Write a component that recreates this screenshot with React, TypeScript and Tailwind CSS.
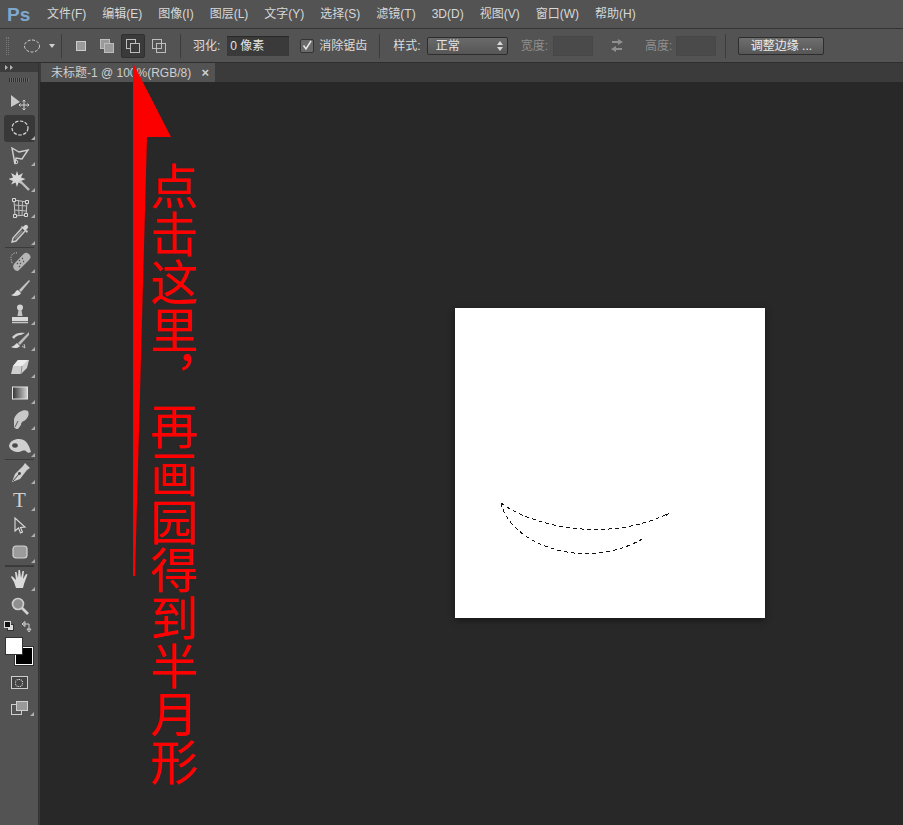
import type { ReactNode } from 'react';

const font = { fontFamily: '"Liberation Sans", "Noto Sans CJK SC", sans-serif' };

const menus = ['文件(F)', '编辑(E)', '图像(I)', '图层(L)', '文字(Y)', '选择(S)', '滤镜(T)', '3D(D)', '视图(V)', '窗口(W)', '帮助(H)'];

function Ic({ children, w = 22, h = 22 }: { children: ReactNode; w?: number; h?: number }) {
  return (
    <svg width={w} height={h} viewBox={`0 0 ${w} ${h}`} fill="none">
      {children}
    </svg>
  );
}

const tools: { icon: ReactNode; corner?: boolean; active?: boolean; sepAfter?: boolean }[] = [
  {
    icon: (
      <Ic>
        <path d="M2 4v12l9-5z" fill="#c9c9c9" />
        <path d="M15 9v10M10 14h10M13.5 10.5 15 9l1.500 1.500M13.500 17.500 15 19l1.500-1.500M11.500 12.500 10 14l1.500 1.500M18.500 12.500 20 14l-1.500 1.500" stroke="#cfcfcf" strokeWidth="1" />
      </Ic>
    ),
  },
  {
    active: true,
    corner: true,
    icon: (
      <Ic>
        <ellipse cx="11" cy="11" rx="8" ry="7" stroke="#d8d8d8" strokeWidth="1.200" strokeDasharray="3.500 1.500" />
      </Ic>
    ),
  },
  {
    corner: true,
    icon: (
      <Ic>
        <path d="M3 4l7 4 9-2-6 9-6-1-1 6-3-16z" stroke="#d0d0d0" strokeWidth="1.400" />
        <circle cx="7" cy="18" r="1.800" stroke="#d0d0d0" />
      </Ic>
    ),
  },
  {
    corner: true,
    icon: (
      <Ic>
        <path d="M8 1l1.500 4.500L14 3l-2 4.500 4.500 1.500L12 11l2 3.500-4.500-2L8 17l-1.500-4.500L2 14.500 4 11-.5 9 4 7.500 2 3l4.500 2.500z" fill="#d8d8d8" />
        <path d="M11 11l9 9" stroke="#bdbdbd" strokeWidth="2.400" />
      </Ic>
    ),
  },
  {
    corner: true,
    icon: (
      <Ic>
        <path d="M5 4l13 2-1 13-11 1z" stroke="#c9c9c9" strokeWidth="1" />
        <path d="M9.500 4.500 10 20M13.500 5l-.5 15M5.300 9l12.400 1M5.700 14l11.800 1" stroke="#bcbcbc" strokeWidth="1" />
        <path d="M3.500 2.500h3v3h-3zM16.500 4.500h3v3h-3zM4.500 18.500h3v3h-3zM15.500 17.500h3v3h-3z" fill="#555" stroke="#d8d8d8" />
      </Ic>
    ),
  },
  {
    corner: true,
    sepAfter: true,
    icon: (
      <Ic>
        <path d="M13 5 4 15l-1 4 4-1 9-10" stroke="#cfcfcf" strokeWidth="1.400" />
        <path d="M13 8l-7 8" stroke="#888" strokeWidth="1.500" />
        <path d="M12 4l6 6 1-2-2-1 1.500-1.500a2 2 0 0 0-3-3L14 4l-1-1z" fill="#d4d4d4" />
      </Ic>
    ),
  },
  {
    corner: true,
    icon: (
      <Ic>
        <path d="M9 21l11-11a3.500 3.500 0 0 0-5.500-6L5 14a4.500 4.500 0 0 0 4 7z" fill="#b5b5b5" />
        <path d="M10 10l1 1M13 8l1 1M8 13l1 1M11 13l1 1M14 11l1 1M10 16l1 1" stroke="#555" strokeWidth="1.200" />
        <path d="M8 3a5 5 0 0 0-6 5c0 3 1 5 2 6" stroke="#ddd" strokeDasharray="1 1.500" />
      </Ic>
    ),
  },
  {
    corner: true,
    icon: (
      <Ic>
        <path d="M20 3 10 13l2 2L21 4z" fill="#c4c4c4" />
        <path d="M9 13c-3 0-2 4-7 5 3 2 9 1 10-2z" fill="#dcdcdc" />
      </Ic>
    ),
  },
  {
    corner: true,
    icon: (
      <Ic>
        <circle cx="11" cy="4.500" r="3" fill="#d2d2d2" />
        <path d="M9.500 7h3l1 6h-5z" fill="#c4c4c4" />
        <path d="M3 14h16v4H3z" fill="#dadada" />
        <path d="M3 19.500h16" stroke="#c8c8c8" strokeWidth="1.500" />
      </Ic>
    ),
  },
  {
    corner: true,
    icon: (
      <Ic>
        <path d="M3 8c3-4 8-5 13-4l-4 2c-3 0-6 2-7 4z" fill="#d0d0d0" />
        <path d="M20 3 9 14l2 2L20 6z" fill="#bdbdbd" />
        <path d="M8 14c-2 1-2 3-6 4 3 2 8 1 9-1z" fill="#dcdcdc" />
        <path d="M13 17l3 2-1-4" stroke="#c4c4c4" />
      </Ic>
    ),
  },
  {
    corner: true,
    icon: (
      <Ic>
        <path d="M9 4h11l-2 8-6 6H2l2-8z" fill="#cfcfcf" />
        <path d="M9 4h10l-6 6H4z" fill="#ececec" />
        <path d="M13 10l-1 8" stroke="#8e8e8e" />
      </Ic>
    ),
  },
  {
    corner: true,
    icon: (
      <svg width="22" height="22" viewBox="0 0 22 22">
        <defs>
          <linearGradient id="grad" x1="0" x2="1" y1="0" y2="0">
            <stop offset="0" stopColor="#333" />
            <stop offset="1" stopColor="#d5d5d5" />
          </linearGradient>
        </defs>
        <rect x="3.500" y="5" width="15" height="12" fill="url(#grad)" stroke="#e4e4e4" />
      </svg>
    ),
  },
  {
    corner: true,
    icon: (
      <Ic>
        <path d="M5 11C8 3 16 1 19 3c2 4-1 8-4 10-2 .5-3 2-3 4l-3 4c-2 0-3-.500-4-2 0-2 0-5 0-8z" fill="#c8c8c8" />
        <path d="M9 13l-3 6" stroke="#5a5a5a" />
      </Ic>
    ),
  },
  {
    corner: true,
    sepAfter: true,
    icon: (
      <Ic w={24}>
        <path d="M1 11c1-5 5-7 10-7 6 0 9 4 11 10l1 3c-2 1-4 1-5-1-2-1-4 0-7 1-5 0-9-2-10-6z" fill="#d0d0d0" />
        <ellipse cx="7" cy="10.500" rx="2.800" ry="2.200" fill="#4a4a4a" />
      </Ic>
    ),
  },
  {
    corner: true,
    icon: (
      <Ic>
        <path d="M16 1l5 5-3 2-7 9-8 3 3-8 8-8z" fill="#cfcfcf" />
        <path d="M4 19l6-7" stroke="#444" />
        <circle cx="10.500" cy="11.500" r="1.400" fill="#444" />
      </Ic>
    ),
  },
  {
    corner: true,
    icon: (
      <span className="block text-[21px] leading-[22px] text-[#d0d0d0]" style={{ fontFamily: '"Liberation Serif", serif' }}>
        T
      </span>
    ),
  },
  {
    corner: true,
    icon: (
      <Ic>
        <path d="M6 3v13l3.500-3 2 5 2-1-2-4.500 4.500-.5z" fill="#555" stroke="#dcdcdc" strokeWidth="1.100" />
      </Ic>
    ),
  },
  {
    corner: true,
    sepAfter: true,
    icon: (
      <svg width="22" height="22" viewBox="0 0 22 22">
        <rect x="4" y="5" width="14" height="12" rx="3" fill="#9b9b9b" stroke="#d4d4d4" strokeWidth="1.200" />
      </svg>
    ),
  },
  {
    corner: true,
    icon: (
      <Ic>
        <path d="M5 13 2 8l1-1 4 4-1-8h1.500L9 9l.5-8H11l1 8 1.500-7H15l-1 8 3-5 1.500.5L15 15l-1 4H7z" fill="#dadada" />
      </Ic>
    ),
  },
  {
    icon: (
      <Ic>
        <circle cx="9" cy="9" r="5.500" fill="#8f8f8f" stroke="#cfcfcf" strokeWidth="1.600" />
        <path d="M13 13l6 6" stroke="#d2d2d2" strokeWidth="2.600" />
      </Ic>
    ),
  },
];

function ModeIcon({ front, back, active }: { front: string; back: string; active?: boolean }) {
  return (
    <div className={`flex h-6 w-6 items-center justify-center rounded-[2px] ${active ? 'border border-[#2f2f2f] bg-[#3a3a3a]' : ''}`}>
      <svg width="14" height="14" viewBox="0 0 14 14" fill="none">
        <rect x="0.500" y="0.500" width="9" height="9" fill={back} stroke="#bdbdbd" />
        <rect x="4.500" y="4.500" width="9" height="9" fill={front} stroke="#bdbdbd" />
      </svg>
    </div>
  );
}

function Sep() {
  return <div className="h-[24px] w-px bg-[#3c3c3c]" />;
}

export default function App() {
  return (
    <div className="relative flex h-[825px] w-[903px] flex-col overflow-hidden bg-[#282828] text-[12px]" style={font}>
      {/* menu */}
      <div className="flex h-[29px] items-center border-b border-[#333] bg-[#535353] text-[#d8d8d8]">
        <span className="ml-[7px] mr-[18px] w-[22px] text-[19px] font-bold leading-none text-[#7fa8cf]">Ps</span>
        <div className="flex gap-[16px]">
          {menus.map((m) => (
            <span key={m}>{m}</span>
          ))}
        </div>
      </div>

      {/* options bar */}
      <div className="flex h-[34px] items-center border-b border-[#2e2e2e] bg-[#535353] text-[#dcdcdc]">
        <div className="ml-[6px] h-[18px] w-[3px] border-x border-dotted border-[#777]" />
        <svg className="ml-[14px]" width="18" height="14" viewBox="0 0 18 14" fill="none">
          <ellipse cx="9" cy="7" rx="7.500" ry="6" stroke="#d0d0d0" strokeDasharray="3 1.500" />
        </svg>
        <svg className="ml-[8px]" width="6" height="4" viewBox="0 0 6 4">
          <path d="M0 0h6L3 4z" fill="#d0d0d0" />
        </svg>
        <div className="ml-[6px]">
          <Sep />
        </div>
        <div className="ml-[7px] flex items-center gap-[2px]">
          <div className="flex h-6 w-6 items-center justify-center">
            <div className="h-[10px] w-[10px] border border-[#ccc] bg-[#9a9a9a]" />
          </div>
          <ModeIcon back="#9a9a9a" front="#9a9a9a" />
          <ModeIcon back="transparent" front="#3a3a3a" active />
          <ModeIcon back="transparent" front="transparent" />
        </div>
        <div className="ml-[9px]">
          <Sep />
        </div>
        <span className="ml-[12px]">羽化:</span>
        <div className="ml-[7px] flex h-[20px] w-[62px] items-center bg-[#3a3a3a] pl-[3px] text-[#e4e4e4] shadow-[inset_0_1px_1px_#2a2a2a]">0 像素</div>
        <div className="ml-[11px] flex h-[14px] w-[14px] items-center justify-center rounded-[2px] border border-[#333] bg-[#6a6a6a]">
          <svg width="12" height="12" viewBox="0 0 12 12" fill="none">
            <path d="M2.500 5.500 5 9l5-8" stroke="#e8e8e8" strokeWidth="1.500" />
          </svg>
        </div>
        <span className="ml-[5px]">消除锯齿</span>
        <div className="ml-[12px]">
          <Sep />
        </div>
        <span className="ml-[13px]">样式:</span>
        <div className="ml-[6px] flex h-[18px] w-[81px] items-center justify-between rounded-[2px] border border-[#2d2d2d] bg-gradient-to-b from-[#6a6a6a] to-[#565656] pl-[8px] pr-[4px] text-[#e4e4e4]">
          <span>正常</span>
          <svg width="6" height="10" viewBox="0 0 6 10">
            <path d="M3 0l3 4H0zM3 10 0 6h6z" fill="#d8d8d8" />
          </svg>
        </div>
        <span className="ml-[13px] text-[#8f8f8f]">宽度:</span>
        <div className="ml-[5px] h-[20px] w-[40px] bg-[#4a4a4a] shadow-[inset_0_0_1px_#333]" />
        <svg className="ml-[17px]" width="14" height="13" viewBox="0 0 14 13">
          <path d="M8 0l5 3-5 3V4H2V2h6zM6 7v2h6v2H6v2L1 10z" fill="#8f8f8f" />
        </svg>
        <span className="ml-[21px] text-[#8f8f8f]">高度:</span>
        <div className="ml-[4px] h-[20px] w-[40px] bg-[#4a4a4a] shadow-[inset_0_0_1px_#333]" />
        <div className="ml-[9px]">
          <Sep />
        </div>
        <div className="ml-[12px] flex h-[18px] w-[86px] items-center justify-center rounded-[2px] border border-[#2d2d2d] bg-gradient-to-b from-[#6e6e6e] to-[#565656] text-[#ececec]">
          调整边缘 ...
        </div>
      </div>

      <div className="flex min-h-0 flex-1">
        {/* tools */}
        <div className="flex w-[39px] flex-none flex-col border-r border-[#333] bg-[#535353]">
          <div className="flex h-[9px] items-center gap-[1px] bg-[#3c3c3c] pl-[5px]">
            <svg width="10" height="5" viewBox="0 0 10 5">
              <path d="M0 0l3 2.500L0 5zM5 0l3 2.500L5 5z" fill="#b5b5b5" />
            </svg>
          </div>
          <div className="mx-auto mt-[6px] h-[4px] w-[20px] bg-[repeating-linear-gradient(90deg,#2f2f2f_0_1px,#666_1px_2px)]" />
          <div className="mt-[7px] flex flex-col">
            {tools.map((t, i) => (
              <div key={i}>
                <div className={`relative ml-[4px] mr-[3px] flex h-[26.300px] items-center justify-center ${t.active ? 'rounded-[3px] bg-[#383838]' : ''}`}>
                  {t.icon}
                  {t.corner && (
                    <svg className="absolute bottom-[2px] right-[0px]" width="4" height="4" viewBox="0 0 4 4">
                      <path d="M4 0v4H0z" fill="#b0b0b0" />
                    </svg>
                  )}
                </div>
                {t.sepAfter && <div className="ml-[5px] mr-[4px] h-[1.500px] bg-[#3a3a3a]" />}
              </div>
            ))}
          </div>
          <div className="mt-[2px] flex items-start justify-between pl-[4px] pr-[6px]">
            <svg width="10" height="10" viewBox="0 0 10 10">
              <rect x="3.500" y="3.500" width="6" height="6" fill="#ddd" stroke="#333" />
              <rect x="0.500" y="0.500" width="6" height="6" fill="#111" stroke="#ddd" />
            </svg>
            <svg width="10" height="11" viewBox="0 0 10 11" fill="none">
              <path d="M1 3h6v6M0 3l3-2.500v5zM5 8l2 3 2-3z" stroke="#d0d0d0" />
            </svg>
          </div>
          <div className="relative ml-[5px] mt-[5px] h-[30px] w-[29px]">
            <div className="absolute left-[10px] top-[10px] h-[18px] w-[18px] border border-white bg-black outline outline-1 outline-[#333]" />
            <div className="absolute left-0 top-0 h-[18px] w-[18px] border border-[#333] bg-white" />
          </div>
          <div className="mx-auto mt-[9px] flex h-[13px] w-[17px] items-center justify-center border border-[#ccc] bg-[#444]">
            <div className="h-[8px] w-[8px] rounded-full border border-dotted border-white" />
          </div>
          <div className="relative mx-[4px] mt-[9px] flex h-[20px] items-center justify-center">
            <svg width="17" height="14" viewBox="0 0 17 14">
              <rect x="0.500" y="3.500" width="10" height="10" fill="#555" stroke="#d0d0d0" />
              <rect x="5.500" y="0.500" width="11" height="9" fill="#999" stroke="#d0d0d0" />
            </svg>
            <svg className="absolute bottom-[2px] right-0" width="4" height="4" viewBox="0 0 4 4">
              <path d="M4 0v4H0z" fill="#b0b0b0" />
            </svg>
          </div>
        </div>

        {/* document area */}
        <div className="flex min-w-0 flex-1 flex-col border-l border-[#3a3a3a]">
          <div className="flex h-[19px] bg-[#3b3b3b]">
            <div className="ml-[1px] flex w-[174px] items-center justify-between bg-[#535353] pl-[10px] pr-[6px] text-[#cfcfcf]">
              <span>未标题-1 @ 100%(RGB/8)</span>
              <span className="text-[13px] font-bold leading-none">×</span>
            </div>
          </div>
          <div className="flex-1 pl-[415px] pt-[226px]">
            <div className="h-[310px] w-[310px] bg-white shadow-[0_2px_6px_#151515]">
              <svg width="310" height="310" viewBox="0 0 310 310" fill="none" shapeRendering="crispEdges">
                <path d="M46 195C75 217 150 236 212 206" stroke="#111" strokeDasharray="4 3" />
                <path d="M46 195C55 236 130 265 189 230" stroke="#111" strokeDasharray="4 3" />
                <path d="M209 207l5-2-2 3z" fill="#111" />
              </svg>
            </div>
          </div>
        </div>
      </div>

      {/* annotation */}
      <svg className="absolute left-0 top-0" width="200" height="600" viewBox="0 0 200 600">
        <path d="M133 63 171 137H147L135 576H133Z" fill="#fc0000" />
      </svg>
      <div
        className="absolute left-[150px] top-[162px] text-[48px] leading-[48px] text-[#f00] [writing-mode:vertical-rl]"
        style={{ fontFamily: '"Noto Sans CJK SC", sans-serif' }}
      >
        点击这里，再画园得到半月形
      </div>
    </div>
  );
}
